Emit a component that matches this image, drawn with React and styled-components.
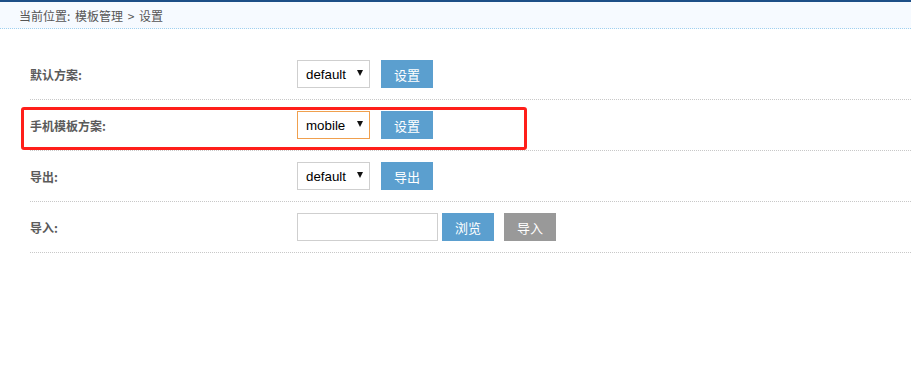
import React from "react";
import styled, { createGlobalStyle } from "styled-components";

const Global = createGlobalStyle`
  html, body { margin: 0; padding: 0; background: #fff; }
  body { font-family: "Liberation Sans", "Noto Sans CJK SC", Arial, sans-serif; }
`;

const Header = styled.div`
  border-top: 2px solid #1d4f87;
  background: #f6faff;
  height: 26px;
  border-bottom: 1px dotted #9fd0ef;
  display: flex;
  align-items: center;
  padding-left: 19px;
  font-size: 12px;
  color: #555;
  font-family: "Noto Sans CJK SC", "Liberation Sans", sans-serif;
  word-spacing: 2px;
`;

const Content = styled.div`
  padding: 20px 0 0 30px;
`;

const Row = styled.div`
  position: relative;
  height: 50px;
  border-bottom: 1px dotted #c8c8c8;
  display: flex;
  align-items: center;
`;

const Label = styled.div`
  width: 267px;
  font-size: 12px;
  font-weight: bold;
  color: #5a5a5a;
  font-family: "Noto Sans CJK SC", "Liberation Sans", sans-serif;
`;

const Controls = styled.div`
  display: flex;
  align-items: center;
  gap: ${(p) => p.$gap || 11}px;
`;

const SelectBox = styled.div`
  box-sizing: border-box;
  width: 73px;
  height: 28px;
  border: 1px solid ${(p) => (p.$focused ? "#f0a04e" : "#cfcfcf")};
  display: flex;
  align-items: center;
  justify-content: space-between;
  padding: 0 6px 0 8px;
  font-family: "Liberation Sans", Arial, sans-serif;
  font-size: 13.33px;
  color: #000;
  background: #fff;
`;

const Arrow = styled.span`
  width: 0;
  height: 0;
  border-left: 3.5px solid transparent;
  border-right: 3.5px solid transparent;
  border-top: 6px solid #111;
  margin-top: -2px;
`;

const Button = styled.div`
  width: 52px;
  height: 28px;
  margin-left: ${(p) => p.$offset || 0}px;
  background: ${(p) => (p.$gray ? "#999999" : "#5b9fcf")};
  color: #fff;
  font-size: 13px;
  display: flex;
  align-items: center;
  justify-content: center;
  font-family: "Noto Sans CJK SC", "Liberation Sans", sans-serif;
`;

const TextInput = styled.div`
  box-sizing: border-box;
  width: 141px;
  height: 28px;
  border: 1px solid #cfcfcf;
  background: #fff;
`;

const Highlight = styled.div`
  position: absolute;
  left: -9px;
  top: 7px;
  width: 506px;
  height: 43px;
  box-sizing: border-box;
  border: 3px solid #ff1f1a;
  border-radius: 3px;
  pointer-events: none;
`;

const Select = ({ value, focused }) => (
  <SelectBox $focused={focused}>
    <span>{value}</span>
    <Arrow />
  </SelectBox>
);

export default function App() {
  return (
    <>
      <Global />
      <Header>当前位置: 模板管理 &gt; 设置</Header>
      <Content>
        <Row>
          <Label>默认方案:</Label>
          <Controls>
            <Select value="default" />
            <Button>设置</Button>
          </Controls>
        </Row>
        <Row>
          <Label>手机模板方案:</Label>
          <Controls>
            <Select value="mobile" focused />
            <Button>设置</Button>
          </Controls>
          <Highlight />
        </Row>
        <Row>
          <Label>导出:</Label>
          <Controls>
            <Select value="default" />
            <Button>导出</Button>
          </Controls>
        </Row>
        <Row>
          <Label>导入:</Label>
          <Controls $gap={4}>
            <TextInput />
            <Button>浏览</Button>
            <Button $gray $offset={6}>导入</Button>
          </Controls>
        </Row>
      </Content>
    </>
  );
}
